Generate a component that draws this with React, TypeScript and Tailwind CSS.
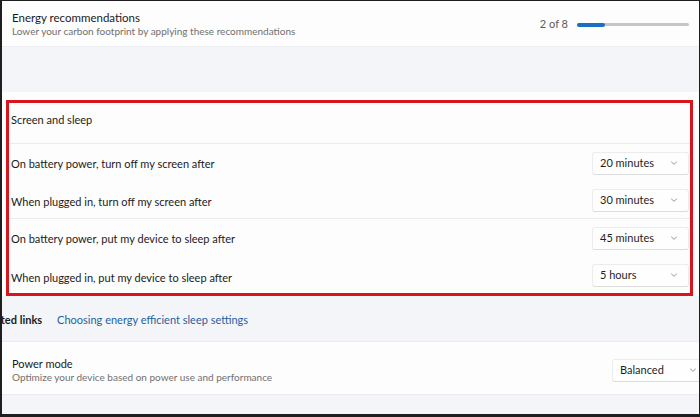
import React from "react";

function Chevron() {
  return (
    <svg width="8" height="8" viewBox="0 0 8 8" fill="none" className="text-[#8a8a8a]">
      <path d="M1.5 3 L4 5.3 L6.5 3" stroke="currentColor" strokeWidth="0.9" strokeLinecap="round" strokeLinejoin="round" />
    </svg>
  );
}

function Dropdown({ value, className = "" }: { value: string; className?: string }) {
  return (
    <div
      className={
        "flex items-center justify-between h-[23px] rounded-[3px] bg-[#fefefe] border border-[#ececec] border-b-[#dcdcdc] pl-[7px] pr-[10px] text-[11px] text-[#1f1f1f] " +
        className
      }
    >
      <span>{value}</span>
      <Chevron />
    </div>
  );
}

const rows = [
  { label: "On battery power, turn off my screen after", value: "20 minutes", h: "h-[38px]", pt: "pt-[3px]" },
  { label: "When plugged in, turn off my screen after", value: "30 minutes", h: "h-[37px] border-b border-[#ececec]", pt: "pt-[5px]" },
  { label: "On battery power, put my device to sleep after", value: "45 minutes", h: "h-[38px]", pt: "pt-[3px]" },
  { label: "When plugged in, put my device to sleep after", value: "5 hours", h: "h-[36px]", pt: "pt-[6px]" },
];

export default function App() {
  return (
    <div
      className="w-[700px] h-[417px] overflow-hidden bg-[#f3f5f9] border-l-2 border-t border-r border-b-[3px] border-[#1e1e1e] flex flex-col"
      style={{ fontFamily: 'Lato, "Noto Sans", sans-serif' }}
    >
      {/* energy recommendations */}
      <div className="h-[46px] shrink-0 bg-[#fdfdfd] border-b border-[#eceef2] flex items-center justify-between pl-[10px] pr-[10px]">
        <div className="flex flex-col leading-none pt-[1px]">
          <span className="text-[11.5px] text-[#1b1b1b]">Energy recommendations</span>
          <span className="text-[10px] text-[#707070] mt-[3px]">Lower your carbon footprint by applying these recommendations</span>
        </div>
        <div className="flex items-center gap-[9px] pt-[2px]">
          <span className="text-[11px] text-[#5c5c5c]">2 of 8</span>
          <div className="w-[112px] h-[3px] rounded-full bg-[#c6c6c6] relative">
            <div className="absolute left-0 top-[-0.5px] h-[4px] w-[28px] rounded-full bg-[#1a6fc0]" />
          </div>
        </div>
      </div>

      <div className="h-[45px] shrink-0" />

      {/* screen and sleep */}
      <div className="shrink-0 bg-[#fdfdfd] pt-[8px] pl-[4px] pr-[6px]">
        <div className="border-[3px] border-[#d8151d] bg-[#fdfdfd] flex flex-col">
          <div className="h-[41px] flex items-center pb-[5px] pl-[2px] text-[11px] text-[#1b1b1b] border-b border-[#ececec]">
            Screen and sleep
          </div>
          {rows.map((r) => (
            <div
              key={r.label}
              className={"flex items-center justify-between pl-[2px] pr-[1px] text-[11px] text-[#1b1b1b] " + r.h}
            >
              <span className={r.pt}>{r.label}</span>
              <Dropdown value={r.value} className="w-[97px]" />
            </div>
          ))}
        </div>
      </div>

      {/* related links */}
      <div className="h-[46px] shrink-0 flex items-center border-b border-[#e9ebef] pt-[3px]">
        <span className="text-[11px] font-bold text-[#1b1b1b] ml-[-22px]">Related links</span>
        <span className="text-[11px] text-[#1f5f9f] ml-[15px]">Choosing energy efficient sleep settings</span>
      </div>

      {/* power mode */}
      <div className="h-[53px] shrink-0 bg-[#fdfdfd] border-b border-[#e9ebef] flex items-center justify-between pl-[10px] pt-[4px]">
        <div className="flex flex-col leading-none">
          <span className="text-[11px] text-[#1b1b1b]">Power mode</span>
          <span className="text-[10px] text-[#707070] mt-[3px]">Optimize your device based on power use and performance</span>
        </div>
        <Dropdown value="Balanced" className="w-[96px] mr-[-9px]" />
      </div>
    </div>
  );
}
